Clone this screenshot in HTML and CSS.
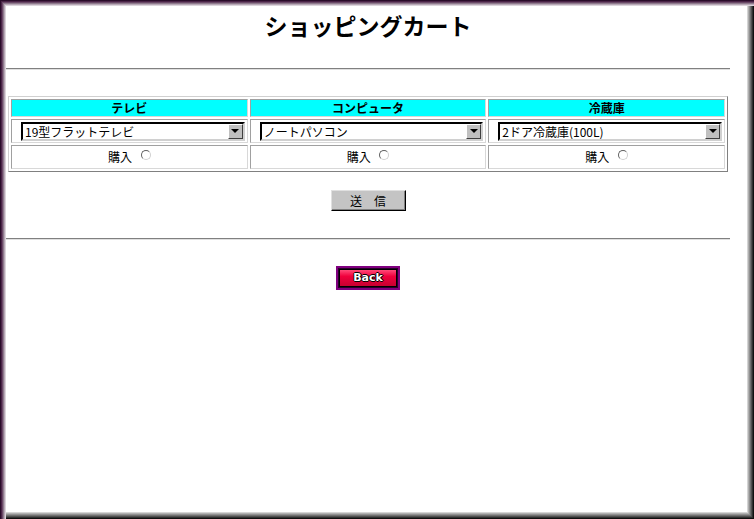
FILE: index.html
```html
<!DOCTYPE html>
<html lang="ja">
<head>
<meta charset="utf-8">
<title>ショッピングカート</title>
<link rel="stylesheet" href="styles.css">
</head>
<body>
<div class="frame">
  <div class="page">
    <h1 class="title">ショッピングカート</h1>
    <hr class="rule">
    <table class="items">
      <tr>
        <th>テレビ</th>
        <th>コンピュータ</th>
        <th>冷蔵庫</th>
      </tr>
      <tr>
        <td><div class="select"><span class="value">19型フラットテレビ</span><span class="arrow"></span></div></td>
        <td><div class="select"><span class="value">ノートパソコン</span><span class="arrow"></span></div></td>
        <td><div class="select"><span class="value">2ドア冷蔵庫(100L)</span><span class="arrow"></span></div></td>
      </tr>
      <tr>
        <td class="buy">購入 <span class="radio"></span></td>
        <td class="buy">購入 <span class="radio"></span></td>
        <td class="buy">購入 <span class="radio"></span></td>
      </tr>
    </table>
    <div class="submit-row"><button class="submit">送　信</button></div>
    <hr class="rule second">
    <div class="back-row"><a class="back"><span class="back-inner">Back</span></a></div>
  </div>
</div>
</body>
</html>
```
FILE: styles.css
```css
html, body {
  margin: 0;
  padding: 0;
  background: #fff;
}
body {
  font-family: "Noto Sans CJK JP", "DejaVu Sans", sans-serif;
  color: #000;
}
.frame {
  width: 754px;
  height: 519px;
  box-sizing: border-box;
  overflow: hidden;
  background: #fff;
  box-shadow:
    inset 1px 1px 0 #2a0c2a,
    inset 2px 2px 0 #4a2447,
    inset 3px 3px 0 #6b4a68,
    inset 4px 4px 0 #8f7a8d,
    inset 5px 5px 0 #b7a9b6,
    inset 6px 6px 0 #dcd4db,
    inset -1px -1px 0 #101010,
    inset -2px -2px 0 #303030,
    inset -3px -3px 0 #505050,
    inset -4px -4px 0 #707070,
    inset -5px -5px 0 #909090,
    inset -6px -6px 0 #b0b0b0,
    inset -7px -7px 0 #d4d4d4;
}
.page {
  padding: 8px 24px 0 6px;
}
.title {
  margin: 0;
  text-align: center;
  font-size: 23px;
  line-height: 34px;
  font-weight: bold;
}
.rule {
  margin: 26px 0 0 0;
  border: 0;
  border-top: 1px solid #808080;
  border-bottom: 1px solid #e0e0e0;
  height: 0;
}
.items {
  margin: 26px 0 0 2px;
  width: 720px;
  border-collapse: separate;
  border-spacing: 2px;
  border: 1px solid;
  border-color: #d0d0d0 #808080 #808080 #d0d0d0;
  table-layout: fixed;
}
.items th, .items td {
  border: 1px solid;
  border-color: #a0a0a0 #d8d8d8 #d8d8d8 #a0a0a0;
  padding: 0;
  text-align: center;
}
.items th {
  background: #00ffff;
  font-size: 12px;
  font-weight: bold;
  height: 16px;
  line-height: 16px;
}
.items td {
  height: 22px;
  font-size: 12px;
}
.select {
  display: flex;
  align-items: center;
  margin: 0 2px 0 9px;
  height: 19px;
  box-sizing: border-box;
  border: 2px solid;
  border-color: #000 #d0d0d0 #d0d0d0 #000;
  background: #fff;
  text-align: left;
}
.value {
  flex: 1;
  padding-left: 2px;
  font-size: 12px;
  line-height: 15px;
  white-space: nowrap;
  overflow: hidden;
}
.arrow {
  width: 15px;
  height: 15px;
  box-sizing: border-box;
  background: #c0c0c0;
  border: 1px solid;
  border-color: #fff #404040 #404040 #fff;
  display: flex;
  align-items: center;
  justify-content: center;
}
.arrow::after {
  content: "";
  width: 0;
  height: 0;
  border-left: 4px solid transparent;
  border-right: 4px solid transparent;
  border-top: 4px solid #000;
}
.buy {
  line-height: 20px;
}
.radio {
  display: inline-block;
  width: 10px;
  height: 10px;
  box-sizing: border-box;
  border-radius: 50%;
  border: 1px solid;
  border-color: #606060 #d0d0d0 #d0d0d0 #606060;
  background: #fff;
  margin-left: 6px;
  vertical-align: 2px;
}
.submit-row {
  display: flex;
  justify-content: center;
  margin-top: 18px;
}
.submit {
  width: 75px;
  height: 21px;
  padding: 0;
  box-sizing: border-box;
  background: #c4c4c4;
  border: 1px solid;
  border-color: #e0e0e0 #000 #000 #e0e0e0;
  box-shadow: inset -1px -1px 0 #808080;
  font-family: "Noto Sans CJK JP", sans-serif;
  font-size: 12px;
  line-height: 18px;
  color: #000;
}
.second {
  margin-top: 27px;
}
.back-row {
  display: flex;
  justify-content: center;
  margin-top: 26px;
}
.back {
  display: block;
  width: 64px;
  height: 24px;
  box-sizing: border-box;
  border: 2px solid #800080;
  background: #2a002a;
  padding: 1px;
}
.back-inner {
  display: block;
  height: 18px;
  box-sizing: border-box;
  border: 1px solid #000;
  background: linear-gradient(#ff4a78, #f0003c 40%, #c80030);
  color: #fff;
  font-family: "DejaVu Sans", sans-serif;
  font-weight: bold;
  font-size: 11px;
  line-height: 15px;
  text-align: center;
  text-shadow: 1px 0 0 #000, -1px 0 0 #000, 0 1px 0 #000, 0 -1px 0 #000;
}
```
